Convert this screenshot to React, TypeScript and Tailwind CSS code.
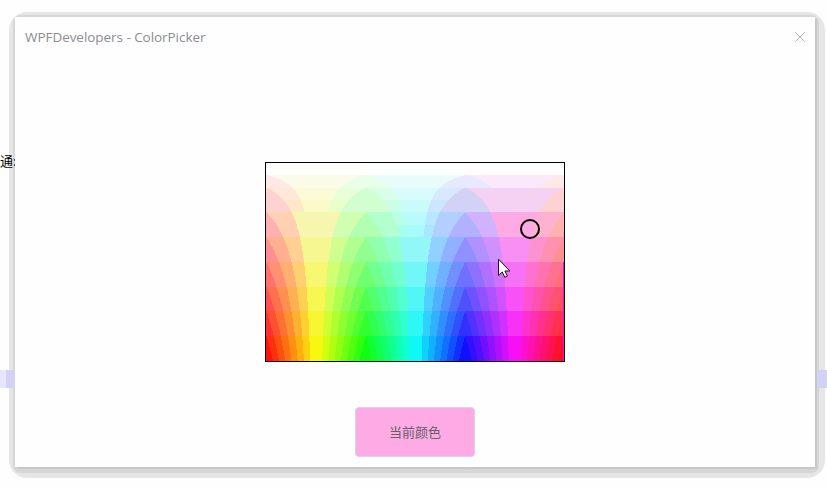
import React from "react";

const W = 298;
const H = 198;

type RGB = [number, number, number];

function hueRgb(h: number): RGB {
  const f = (n: number) => {
    const k = (n + h / 60) % 6;
    return 255 * (1 - Math.max(0, Math.min(k, 4 - k, 1)));
  };
  return [f(5), f(3), f(1)];
}

// Colours whose band is tinted away from the mean of its cell.
const tints: Record<string, string> = {
  white: "#fefefe",
  edge: "#e010f0",
  "pink-6": "#f5d1f3",
  "pink-5": "#fdaae5",
  "7,4,7": "#f98ff5",
  "6,6,7": "#d2d2f4",
  "yellow-5": "#f7f6ae",
};

function cellOf(c: RGB, hue: number): string {
  const s = [...c].sort((a, b) => a - b);
  const lo = s[0];
  const mid = s[1];
  const b32 = c.map((v) => Math.floor(Math.min(v, 255) / 32)).join(",");
  const b16 = c.map((v) => Math.floor(Math.min(v, 255) / 16)).join(",");
  if (lo >= 240) return "white";
  if (lo >= 224) return "f" + b16;
  if (lo >= 192) {
    if (mid < 224) return b32;
    if (hue > 240) return "pink-6";
    return "f" + b16;
  }
  if (lo >= 160 && mid >= 224) {
    if (hue > 240) return "pink-5";
    if (hue > 120) return "f" + b16;
    if (hue < 90) return "yellow-5";
  }
  return b32;
}

function buildSpectrum() {
  const cells = new Map<string, { sum: RGB; n: number; d: string }>();
  for (let y = 0; y < H; y++) {
    const s = Math.min(1, (y + Math.max(0, (y - 124) / 60)) / H);
    let start = 0;
    let current = "";
    const flush = (end: number) => {
      if (current) cells.get(current)!.d += `M${start} ${y}h${end - start}v1h${start - end}z`;
    };
    for (let x = 0; x < W; x++) {
      const hue = (x / W) * 360;
      const c = hueRgb(hue).map((v) => 255 - s * (255 - v)) as RGB;
      const key = x === W - 1 && y > 98 ? "edge" : cellOf(c, hue);
      if (!cells.has(key)) cells.set(key, { sum: [0, 0, 0], n: 0, d: "" });
      const cell = cells.get(key)!;
      cell.n++;
      c.forEach((v, i) => (cell.sum[i] += v));
      if (key !== current) {
        flush(x);
        current = key;
        start = x;
      }
    }
    flush(W);
  }
  return [...cells].map(([key, c]) => ({
    key,
    d: c.d,
    fill: tints[key] ?? `rgb(${c.sum.map((v) => Math.round(v / c.n)).join(",")})`,
  }));
}

const spectrum = buildSpectrum();

function Spectrum() {
  return (
    <div className="relative h-[200px] w-[300px] border border-black">
      <svg className="block" width={W} height={H} shapeRendering="crispEdges">
        {spectrum.map((c) => (
          <path key={c.key} d={c.d} fill={c.fill} />
        ))}
      </svg>
      <div className="absolute left-[254px] top-[56px] size-5 rounded-full border-2 border-black" />
      <svg className="absolute left-[232px] top-[95px]" width="13" height="21" viewBox="0 0 13 21">
        <path
          d="M.5 1.2v16.3l3.7-3.5 2.6 5.3 2.6-1.2-2.5-5.1h5z"
          fill="#fff"
          stroke="#1d1025"
          strokeWidth="1"
        />
      </svg>
    </div>
  );
}

export default function App() {
  return (
    <div className="relative h-[489px] w-[827px] overflow-hidden bg-[#fefefe] pl-[9px] pt-3 font-['Open_Sans','Noto_Sans_CJK_SC',sans-serif]">
      <div className="h-[466px] w-[816px] rounded-[18px] bg-[#e6e6e6] pl-1 pt-[3px]">
        <div className="h-[458px] w-[806px] rounded-[8px] bg-[#d6d6d6] pl-0.5 pt-0.5">
          {/* Page behind the window, seen only at its left and right edges */}
          <div className="absolute inset-x-0 top-[152px] flex h-[236px] flex-col justify-between">
            <span className="whitespace-nowrap text-[13px] leading-[18px] text-black">通:</span>
            <div className="flex h-[18px]">
              <div className="w-1.5 bg-[#e6e6fc]" />
              <div className="flex-1 bg-[#d2d2f4]" />
            </div>
          </div>
          <main className="relative flex h-[450px] w-[800px] flex-col items-center bg-[#fefefe] shadow-[2px_2px_0_#c8c8c8]">
            <header className="flex h-10 w-full items-center justify-between px-2.5">
              <h1 className="text-[13.5px] leading-5 tracking-[-0.05px] text-[#8c8c92]">WPFDevelopers - ColorPicker</h1>
              <svg width="10" height="10" viewBox="0 0 10 10" stroke="#aaa" strokeWidth="0.9">
                <path d="M.3.3l9.4 9.4M9.7.3L.3 9.7" />
              </svg>
            </header>
            <section className="flex flex-1 flex-col items-center justify-end gap-[45px] pb-2.5">
              <Spectrum />
              <button className="h-[50px] w-[120px] rounded-[4px] border border-[#d8d0f2] bg-[#fdaae5] pt-px text-[13px] text-[#66606a]">
                当前颜色
              </button>
            </section>
          </main>
        </div>
      </div>
    </div>
  );
}
